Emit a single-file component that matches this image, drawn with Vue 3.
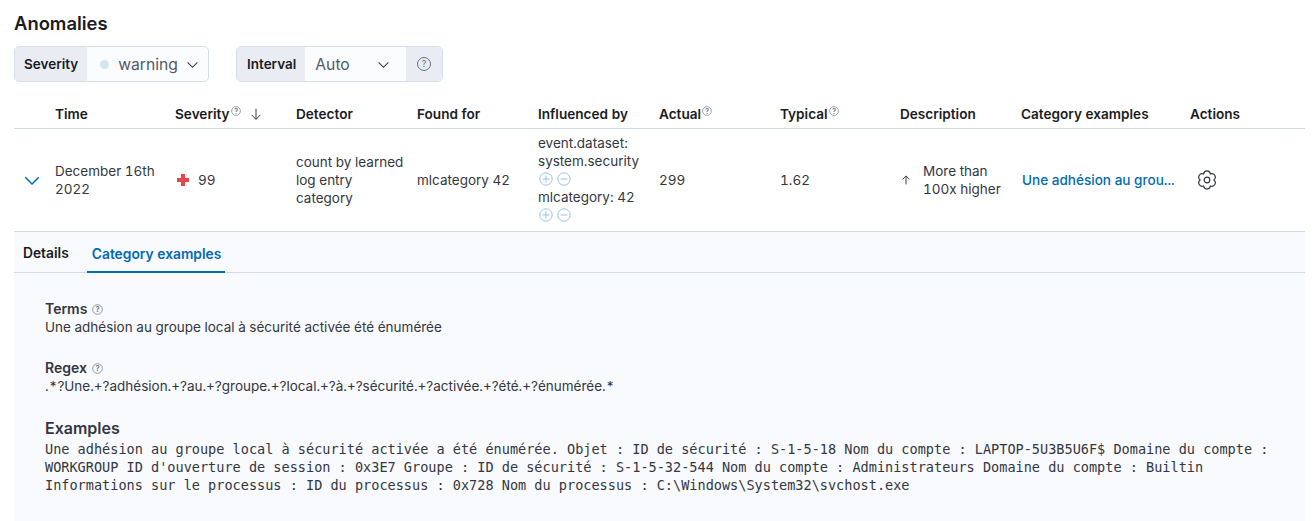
<script setup>
const cols = [
  { label: 'Time' },
  { label: 'Severity', help: true, sort: true },
  { label: 'Detector' },
  { label: 'Found for' },
  { label: 'Influenced by' },
  { label: 'Actual', help: true },
  { label: 'Typical', help: true },
  { label: 'Description' },
  { label: 'Category examples' },
  { label: 'Actions' }
]
const influencers = [['event.dataset:', 'system.security'], ['mlcategory: 42']]
const exampleLines = [
  "Une adhésion au groupe local à sécurité activée a été énumérée. Objet : ID de sécurité : S-1-5-18 Nom du compte : LAPTOP-5U3B5U6F$ Domaine du compte :",
  "WORKGROUP ID d'ouverture de session : 0x3E7 Groupe : ID de sécurité : S-1-5-32-544 Nom du compte : Administrateurs Domaine du compte : Builtin",
  "Informations sur le processus : ID du processus : 0x728 Nom du processus : C:\\Windows\\System32\\svchost.exe"
]
const pt = (deg, r) => {
  const a = (deg * Math.PI) / 180
  return `${(10 + r * Math.cos(a)).toFixed(2)} ${(10 + r * Math.sin(a)).toFixed(2)}`
}
const gearPath = (() => {
  let d = `M${pt(-120, 6.9)}`
  for (let k = 0; k < 6; k++) {
    const c = -90 + k * 60
    d += `C${pt(c - 15, 10.4)} ${pt(c + 15, 10.4)} ${pt(c + 30, 6.9)}`
  }
  return d + 'Z'
})()
</script>

<template>
  <div class="page">
    <h2 class="title">Anomalies</h2>
    <div class="controls">
      <div class="group severity">
        <span class="prepend">Severity</span>
        <div class="select">
          <span class="dot"></span>
          <span class="sel-text">warning</span>
          <svg class="chev" width="13" height="13" viewBox="0 0 16 16"><path d="M2 5.5l6 6 6-6" fill="none" stroke="#343741" stroke-width="1.3"/></svg>
        </div>
      </div>
      <div class="group interval">
        <span class="prepend wide">Interval</span>
        <div class="select auto">
          <span class="sel-text">Auto</span>
          <svg class="chev" width="13" height="13" viewBox="0 0 16 16"><path d="M2 5.5l6 6 6-6" fill="none" stroke="#343741" stroke-width="1.3"/></svg>
        </div>
        <span class="append">
          <svg width="16" height="16" viewBox="0 0 16 16"><circle cx="8" cy="8" r="6.5" fill="none" stroke="#69707d"/><text x="8" y="11" text-anchor="middle" class="q">?</text></svg>
        </span>
      </div>
    </div>

    <div class="table">
      <div class="row head">
        <div class="cell"></div>
        <div v-for="c in cols" :key="c.label" class="cell th">
          <span>{{ c.label }}</span>
          <svg v-if="c.help" class="sup" width="10" height="10" viewBox="0 0 16 16"><circle cx="8" cy="8" r="7" fill="none" stroke="#69707d"/><text x="8" y="12" text-anchor="middle" class="q big">?</text></svg>
          <svg v-if="c.sort" class="sort" width="14" height="14" viewBox="0 0 16 16"><path d="M8 2v12M3 9l5 5 5-5" fill="none" stroke="#343741" stroke-width="1.1"/></svg>
        </div>
      </div>
      <div class="row body">
        <div class="cell expand">
          <svg width="18" height="18" viewBox="0 0 16 16"><path d="M2 5.5l6 6 6-6" fill="none" stroke="#006bb4" stroke-width="1.3"/></svg>
        </div>
        <div class="cell">December 16th 2022</div>
        <div class="cell sev">
          <svg width="12" height="12" viewBox="0 0 12 12"><path d="M4 0h4v4h4v4H8v4H4V8H0V4h4z" fill="#e7474a"/></svg>
          <span>99</span>
        </div>
        <div class="cell detector">count by learned log entry category</div>
        <div class="cell">mlcategory 42</div>
        <div class="cell infl">
          <div v-for="(lines, n) in influencers" :key="n">
            <div v-for="l in lines" :key="l">{{ l }}</div>
            <div class="filters">
              <svg width="14" height="14" viewBox="0 0 14 14"><circle cx="7" cy="7" r="6.2" fill="none" stroke="#9cc3e2"/><path d="M3.5 7h7M7 3.500v7" stroke="#9cc3e2"/></svg>
              <svg width="14" height="14" viewBox="0 0 14 14"><circle cx="7" cy="7" r="6.2" fill="none" stroke="#9cc3e2"/><path d="M3.5 7h7" stroke="#9cc3e2"/></svg>
            </div>
          </div>
        </div>
        <div class="cell">299</div>
        <div class="cell">1.62</div>
        <div class="cell desc">
          <svg class="arrow" width="10" height="10" viewBox="0 0 16 16"><path d="M8 15V1.500M2.500 7L8 1.500 13.500 7" fill="none" stroke="#343741" stroke-width="1.500"/></svg>
          <span>More than 100x higher</span>
        </div>
        <div class="cell"><span class="link">Une adhésion au grou...</span></div>
        <div class="cell gear">
          <svg width="20" height="20" viewBox="0 0 20 20" fill="none" stroke="#343741" stroke-width="1.200" stroke-linejoin="round">
            <path :d="gearPath"/>
            <circle cx="10" cy="10" r="2.800"/>
          </svg>
        </div>
      </div>
    </div>

    <div class="panel">
      <div class="tabs">
        <span class="tab">Details</span>
        <span class="tab active">Category examples</span>
      </div>
      <div class="content">
        <div class="block">
          <div class="lbl">Terms
            <svg width="11" height="11" viewBox="0 0 16 16"><circle cx="8" cy="8" r="7" fill="none" stroke="#69707d"/><text x="8" y="12" text-anchor="middle" class="q big">?</text></svg>
          </div>
          <div class="txt">Une adhésion au groupe local à sécurité activée été énumérée</div>
        </div>
        <div class="block regex">
          <div class="lbl">Regex
            <svg width="11" height="11" viewBox="0 0 16 16"><circle cx="8" cy="8" r="7" fill="none" stroke="#69707d"/><text x="8" y="12" text-anchor="middle" class="q big">?</text></svg>
          </div>
          <div class="txt">.*?Une.+?adhésion.+?au.+?groupe.+?local.+?à.+?sécurité.+?activée.+?été.+?énumérée.*</div>
        </div>
        <div class="examples">Examples</div>
        <div class="mono">
          <div v-for="l in exampleLines" :key="l">{{ l }}</div>
        </div>
      </div>
    </div>
  </div>
</template>

<style>
html, body { margin: 0; background: #fff; }
</style>

<style scoped>
.page {
  width: 1291px;
  height: 521px;
  padding-left: 14px;
  box-sizing: content-box;
  font-family: Inter, "Liberation Sans", sans-serif;
  font-size: 13.5px;
  font-variant-numeric: tabular-nums;
  color: #343741;
  overflow: hidden;
}
.title {
  margin: 0;
  padding-top: 13px;
  font-size: 18.4px;
  line-height: 21px;
  font-weight: 600;
  color: #1a1c21;
}
.controls {
  display: flex;
  gap: 27px;
  margin-top: 12px;
}
.group {
  display: flex;
  height: 36px;
  box-sizing: border-box;
  border: 1px solid #d8dfea;
  border-radius: 5px;
  overflow: hidden;
  background: #fbfcfe;
}
.severity { width: 195px; }
.interval { width: 207px; }
.prepend {
  display: flex;
  align-items: center;
  padding: 0 9px;
  background: #e9edf3;
  font-size: 13.5px;
  font-weight: 600;
  color: #1a1c21;
}
.prepend.wide { padding-left: 10px; }
.select {
  display: flex;
  align-items: center;
  flex: 1;
  font-size: 15.7px;
  color: #535966;
  padding-left: 13px;
}
.select.auto { padding-left: 10px; }
.dot {
  width: 9px;
  height: 9px;
  border-radius: 50%;
  background: #d2e6f5;
  margin-right: 9px;
}
.sel-text { flex: 1; }
.chev { margin-right: 9px; }
.auto .chev { margin-right: 16px; }
.append {
  display: flex;
  align-items: center;
  justify-content: center;
  width: 36px;
  background: #e9edf3;
}
.q {
  font-family: Inter, sans-serif;
  font-size: 9px;
  fill: #69707d;
}
.q.big { font-size: 11px; }
.table { width: 1291px; margin-top: 18px; }
.row {
  display: grid;
  grid-template-columns: 33px 120px 121px 121px 121px 121px 121px 120px 121px 169px 123px;
  border-bottom: 1px solid #d3dae6;
}
.head { height: 29px; box-sizing: border-box; }
.body { height: 103px; box-sizing: border-box; }
.cell {
  padding: 0 8px;
  display: flex;
  align-items: center;
  line-height: 18px;
  box-sizing: border-box;
}
.th {
  font-weight: 600;
  color: #1a1c21;
  font-size: 13.6px;
  gap: 1px;
  align-items: center;
}
.sup { margin-bottom: 6px; }
.sort { margin-left: 7px; }
.expand { padding: 0 0 0 9px; }
.sev { gap: 9px; padding-left: 10px; }
.detector { padding-right: 0; }
.infl {
  display: flex;
  flex-direction: column;
  align-items: flex-start;
  justify-content: center;
  padding-bottom: 3px;
}
.filters {
  display: flex;
  gap: 4px;
  height: 18px;
  align-items: center;
  padding-left: 1px;
}
.desc { gap: 12px; padding: 0 0 0 9px; }
.arrow { flex: none; }
.link { color: #006bb4; font-weight: 500; font-size: 13.55px; margin-left: 1px; white-space: nowrap; }
.gear { padding-left: 15px; }
.panel {
  width: 1291px;
  height: 289px;
  background: #f8fafd;
}
.tabs {
  display: flex;
  height: 41px;
  box-sizing: border-box;
  border-bottom: 1px solid #d3dae6;
  padding-left: 4px;
}
.tab {
  display: flex;
  align-items: center;
  padding: 2px 5px 0;
  margin-right: 13px;
  font-size: 13.8px;
  font-weight: 600;
  color: #1a1c21;
}
.tab.active {
  color: #006bb4;
  border-bottom: 2px solid #006bb4;
  margin-bottom: -1px;
  padding-top: 4px;
  padding-right: 4px;
}
.content { padding: 27px 0 0 31px; }
.block { line-height: 18px; }
.regex { margin-top: 23px; }
.lbl {
  font-size: 14px;
  font-weight: 600;
  color: #343741;
  display: flex;
  align-items: center;
  gap: 5px;
}
.txt { color: #343741; }
.examples {
  margin-top: 23px;
  font-size: 16px;
  line-height: 20px;
  font-weight: 600;
  color: #343741;
}
.mono {
  font-family: "DejaVu Sans Mono", "Liberation Mono", monospace;
  font-size: 13.55px;
  line-height: 18px;
  white-space: pre;
  color: #343741;
  margin-top: 2px;
}
</style>
